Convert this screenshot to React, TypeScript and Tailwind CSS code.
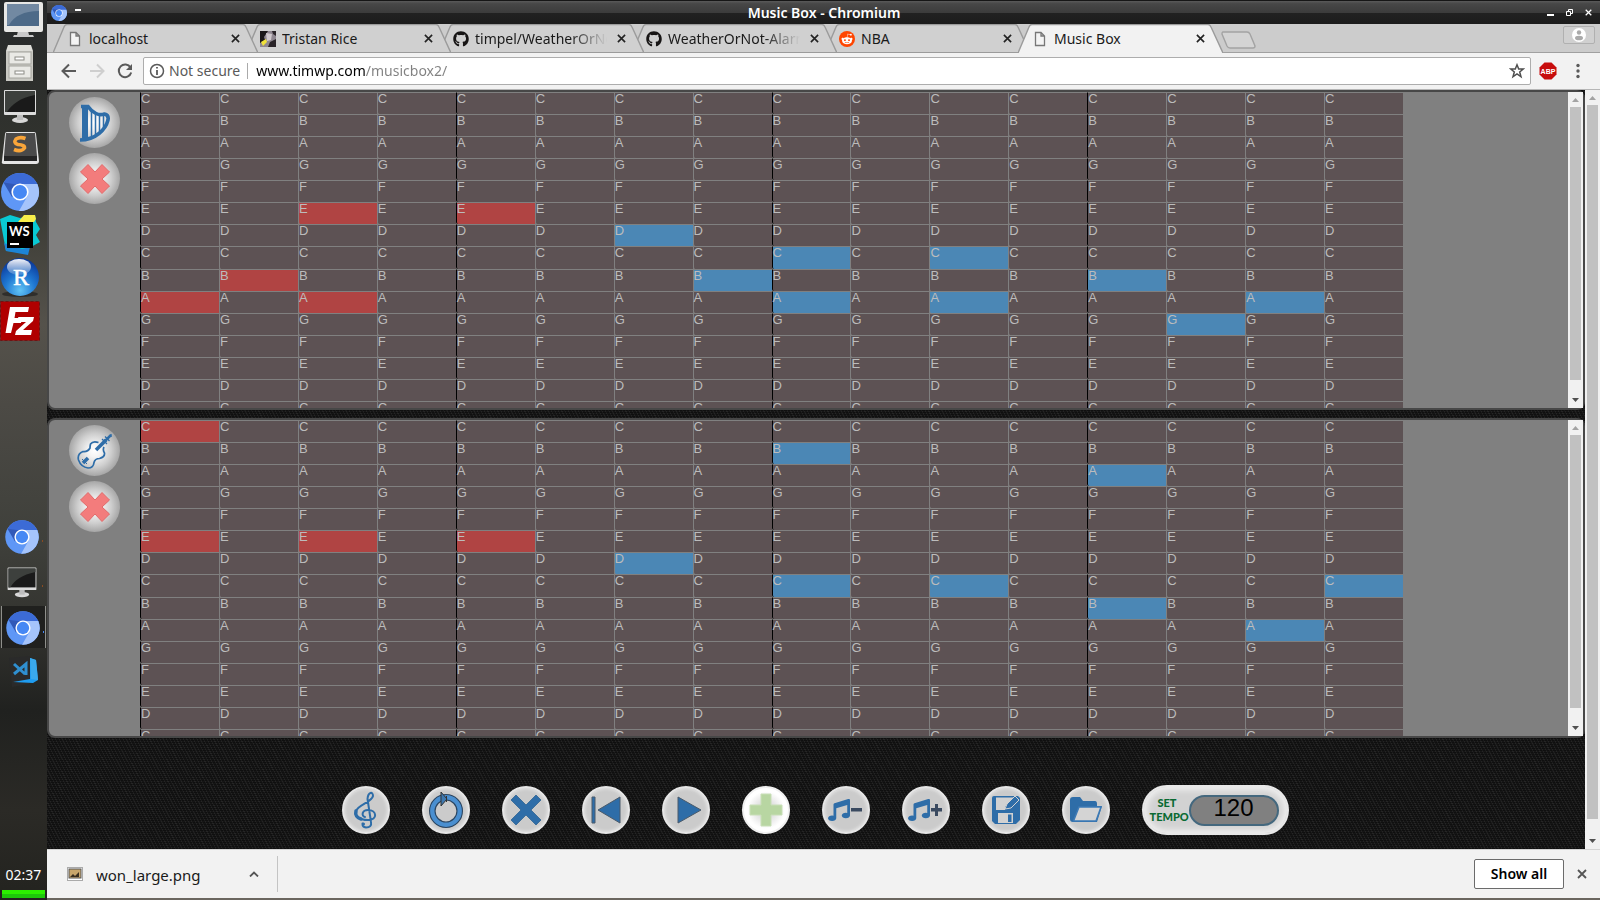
import type { ReactNode } from "react";
import { FaGithub, FaRedditAlien, FaMusic } from "react-icons/fa";

const NOTES = ["C", "B", "A", "G", "F", "E", "D", "C", "B", "A", "G", "F", "E", "D", "C"];
const COLUMNS = Array.from({ length: 16 }, (_, i) => i);

type Marks = Record<string, "red" | "blue">;

const HARP: Marks = {
  "5-2": "red", "5-4": "red", "8-1": "red", "9-0": "red", "9-2": "red",
  "6-6": "blue", "7-8": "blue", "7-10": "blue", "8-7": "blue", "8-12": "blue",
  "9-8": "blue", "9-10": "blue", "9-14": "blue", "10-13": "blue",
};

const VIOLIN: Marks = {
  "0-0": "red", "5-0": "red", "5-2": "red", "5-4": "red",
  "1-8": "blue", "2-12": "blue", "6-6": "blue", "7-8": "blue", "7-10": "blue",
  "7-15": "blue", "8-12": "blue", "9-14": "blue",
};

/* ---------- desktop launcher ---------- */

function Chromium() {
  return (
    <g>
      <circle r="19" fill="#5f97f6" />
      <path d="M0 0L-16.5-9.5A19 19 0 0 1 16.5-9.5L18-7H0Z" fill="#3c6bd6" />
      <path d="M-16.5-9.5L-8 5L0-7Z" fill="#3159b8" />
      <path d="M0-8H17.3A19 19 0 0 1-1 19L8 3Z" fill="#a5c4fb" />
      <circle r="8.6" fill="#fff" />
      <circle r="7" fill="#4688f4" />
    </g>
  );
}

function DarkMonitor() {
  return (
    <g>
      <ellipse cx="0" cy="14" rx="8" ry="3" fill="#d8d8d8" />
      <rect x="-3" y="8" width="6" height="6" fill="#bdbdbd" />
      <rect x="-16" y="-16" width="32" height="25" rx="1" fill="#dcdcdc" />
      <rect x="-15" y="-15" width="30" height="21" fill="#1a1a1a" />
      <path d="M-15-15H15V-11C0-8-8-2-13 6H-15Z" fill="#3d403d" />
    </g>
  );
}

function Launcher({ name, box, tall, children }: { name: string; box: string; tall?: boolean; children: ReactNode }) {
  return (
    <button aria-label={name} className="block shrink-0">
      <svg viewBox={box} className={tall ? "block h-[45px] w-[47px]" : "block h-[43px] w-[47px]"}>
        {children}
      </svg>
    </button>
  );
}

function Sidebar() {
  return (
    <nav
      aria-label="Launcher"
      className="flex w-[47px] shrink-0 flex-col bg-linear-[180deg,#26292a_0%,#34352f_20%,#55524b_36%,#4c4a45_45%,#3f403b_60%,#32322e_70%,#20211f_79%,#2b2a26_90%,#23231f_100%]"
    >
      <Launcher name="Files on desktop" box="0 0 47 43">
        <path d="M18 31h10l1 4h4l1 2H13l1-2h3z" fill="#c9c9c9" />
        <rect x="4" y="2" width="39" height="30" rx="2" fill="#e8e8e6" />
        <rect x="7" y="4" width="32" height="22" fill="#4d6a88" />
        <path d="M7 4H39V11C24 11 14 16 9 25H7Z" fill="#7289a2" />
      </Launcher>
      <Launcher name="File cabinet" box="0 43 47 43">
        <path d="M8 45H31L33 51V81H6V51Z" fill="#deded9" />
        <path d="M6 51H33V81H6Z" fill="#c9c9c3" />
        <rect x="9" y="52" width="22" height="12" fill="#e9e9e5" stroke="#a4a49e" />
        <rect x="9" y="66" width="22" height="12" fill="#e9e9e5" stroke="#a4a49e" />
        <rect x="15" y="57" width="9" height="3" fill="#fff" stroke="#8c8c86" />
        <rect x="15" y="71" width="9" height="3" fill="#fff" stroke="#8c8c86" />
      </Launcher>
      <Launcher name="Terminal" box="0 86 47 43">
        <g transform="translate(20 106)"><DarkMonitor /></g>
      </Launcher>
      <Launcher name="Sublime Text" box="0 129 47 43">
        <path d="M5 134Q5 132 7 132H34Q36 132 36 134L39 161Q39 164 36 164H4Q1 164 2 161Z" fill="#e5e5e5" />
        <path d="M6 133H35L37 156H4Z" fill="#4a4a4a" />
        <path d="M4 156H37V161H4Z" fill="#262626" />
        <path d="M25.500 138.500Q20 136.500 16 139Q13 143 18 144.500Q25 145 24.500 148Q21 152.500 14 149.500" fill="none" stroke="#f9a53a" strokeWidth="3.600" />
      </Launcher>
      <Launcher name="Chromium" box="0 172 47 43">
        <g transform="translate(20 192)"><Chromium /></g>
      </Launcher>
      <Launcher name="WebStorm" box="0 215 47 43">
        <path d="M0 219L10 215L20 218L35 215L36 222L40 229L36 235L40 242L22 252L6 251Z" fill="#09c9d4" />
        <path d="M4 243L22 249L30 247L28 255L6 251Z" fill="#1d84d6" />
        <path d="M24 215H35L36 219L34 222H18Z" fill="#f8ee4a" />
        <rect x="7" y="222" width="26" height="26" fill="#000" />
        <text x="9" y="236" fontSize="13" fontWeight="700" fill="#fff" fontFamily="Lato, sans-serif">WS</text>
        <rect x="10" y="243" width="9" height="2" fill="#fff" />
      </Launcher>
      <Launcher name="RStudio" box="0 258 47 43">
        <defs>
          <radialGradient id="rball" cx="0.500" cy="0.850" r="0.800">
            <stop offset="0" stopColor="#62c4f5" />
            <stop offset="0.500" stopColor="#1f78d2" />
            <stop offset="1" stopColor="#0b3a9c" />
          </radialGradient>
          <linearGradient id="rshine" x1="0" y1="0" x2="0" y2="1">
            <stop offset="0" stopColor="#fff" stopOpacity="0.950" />
            <stop offset="1" stopColor="#fff" stopOpacity="0.150" />
          </linearGradient>
        </defs>
        <ellipse cx="20" cy="294" rx="18" ry="3" fill="#2f2e2b" />
        <circle cx="20" cy="277" r="19" fill="url(#rball)" />
        <ellipse cx="19" cy="267" rx="12" ry="8" fill="url(#rshine)" />
        <text x="13" y="285" fontSize="24" fill="#fff" stroke="#fff" strokeWidth="0.500" fontFamily="Liberation Serif, serif">R</text>
      </Launcher>
      <Launcher name="FileZilla" box="0 301 47 43">
        <rect x="0.500" y="301.500" width="39" height="39" fill="#b00000" stroke="#6e1414" strokeDasharray="3 2" />
        <path d="M10 307H29L28 312H15.500L14.500 318H22L21 323H13.500L11 333H5.500Z" fill="#fff" />
        <path d="M18 317H34L33 321L23 330H32L31 335H15L16 331L26 322H20Z" fill="#fff" />
      </Launcher>

      <div className="mt-[171px] flex flex-col">
        <Launcher name="Chromium window" box="0 515 47 45" tall>
          <g transform="translate(22 537) scale(0.880)"><Chromium /></g>
          <rect x="42" y="540" width="1" height="2" fill="#8a4a20" />
        </Launcher>
        <Launcher name="Terminal window" box="0 560 47 45" tall>
          <g transform="translate(22 582) scale(0.900)"><DarkMonitor /></g>
          <rect x="42" y="585" width="1" height="2" fill="#8a4a20" />
        </Launcher>
        <Launcher name="Music Box window" box="0 605 47 45" tall>
          <rect x="1" y="606" width="45" height="42" fill="#20201e" />
          <rect x="1" y="606" width="1" height="42" fill="#8f8f8b" />
          <rect x="45" y="606" width="1" height="42" fill="#8f8f8b" />
          <g transform="translate(23 628) scale(0.880)"><Chromium /></g>
          <rect x="43" y="631" width="1" height="2" fill="#4688f4" />
        </Launcher>
        <Launcher name="Visual Studio Code" box="0 650 47 45" tall>
          <path d="M9 658L30 656L29 684L12 687Z" fill="#2a2a2a" />
          <path d="M30 658L36 660L38 680L33 683L13 682L30 679Z" fill="#1f9cf0" />
          <path d="M30 658L36 660L38 680L31 679Z" fill="#3aa9ec" />
          <path d="M14 664L25 674M14 674L26 664V675" fill="none" stroke="#2f8fd0" strokeWidth="3" />
        </Launcher>
      </div>

      <div className="mt-auto pb-0.5">
        <p className="text-center font-['Noto_Sans',sans-serif] text-sm leading-[30px] text-white">02:37</p>
        <div className="mx-0.5 h-1 bg-[#2cf000]" />
        <div className="mx-0.5 h-1 bg-[#1ec80a]" />
      </div>
    </nav>
  );
}

/* ---------- browser chrome ---------- */

function Cross({ className }: { className: string }) {
  return (
    <svg viewBox="0 0 10 10" className={className} fill="none" stroke="currentColor" strokeWidth="1.800">
      <path d="M1 1L9 9M9 1L1 9" />
    </svg>
  );
}

function TitleBar() {
  return (
    <header className="flex h-6 shrink-0 items-center border-t border-[#161616] bg-linear-[180deg,#5a5a5a_0%,#474747_12%,#3c3c3c_50%,#212121_51%,#1c1c1c_100%] px-1 text-white">
      <svg viewBox="-19 -19 38 38" className="size-4"><Chromium /></svg>
      <span className="mt-2 ml-2 h-0.5 w-1.5 self-start bg-white" />
      <h1 className="flex-1 pl-5 text-center text-sm font-semibold">Music Box - Chromium</h1>
      <div className="flex items-center gap-3 pr-1">
        <button aria-label="Minimize" className="flex size-[7px] items-end"><span className="h-0.5 w-full bg-white" /></button>
        <button aria-label="Restore">
          <svg viewBox="0 0 7 7" className="size-[7px]" fill="none" stroke="#fff"><path d="M2.500 2V.5H6.500V4.500H5M.5 2.500H4.500V6.500H.5Z" /></svg>
        </button>
        <button aria-label="Close window"><Cross className="size-[7px]" /></button>
      </div>
    </header>
  );
}

function PageIcon() {
  return (
    <svg viewBox="0 0 16 16" className="size-4 shrink-0" fill="#f4f4f4" stroke="#777" strokeWidth="1.300">
      <path d="M3.500 1.500H9L12.500 5V14.500H3.500ZM9 1.500V5H12.500" />
    </svg>
  );
}

function Tab({ title, icon, active, order }: { title: string; icon: ReactNode; active?: boolean; order: string }) {
  const faded = title.length > 15;
  return (
    <div role="tab" aria-selected={!!active} className={`relative -mr-3 flex h-[29px] w-[205px] shrink-0 items-center pl-3.5 ${order}`}>
      <svg viewBox="0 0 205 29" className="absolute inset-0 h-full w-full" fill={active ? "#f2f2f2" : "#d0d0d0"} stroke="#9b9b9b">
        <path d="M0 29L11 3Q12 .5 14 .5H190Q192 .5 193 3L205 29" strokeWidth="1.400" />
        {!active && <path d="M0 28.500H205" />}
      </svg>
      <span className="relative flex w-4 shrink-0">{icon}</span>
      <span
        className={`relative ml-1.5 w-[134px] overflow-hidden text-sm whitespace-nowrap text-[#1a1a1a] ${faded ? "mask-[linear-gradient(90deg,#000_96px,transparent_132px)]" : ""}`}
      >
        {title}
      </span>
      <button aria-label={`Close ${title}`} className="relative ml-2 shrink-0 text-[#222]"><Cross className="size-[9px]" /></button>
    </div>
  );
}

function TabStrip() {
  return (
    <div role="tablist" className="relative z-0 flex h-[29px] shrink-0 border-b border-[#a0a0a0] bg-[#cccccc] pl-1.5">
      <Tab title="localhost" icon={<PageIcon />} order="z-[5]" />
      <Tab
        title="Tristan Rice"
        order="z-[4]"
        icon={
          <svg viewBox="0 0 16 16" className="size-4">
            <rect width="16" height="16" fill="#8f8790" />
            <path d="M0 0H8L4 6L5 9L0 12Z" fill="#1a1718" />
            <path d="M12 0H16V5L13 3ZM10 11L16 8V16H8Z" fill="#2a2428" />
            <path d="M6 2L12 3L11 9L7 10Z" fill="#cfc8cc" />
            <path d="M1 11L6 8L7 11L3 15Z" fill="#f0e23a" />
          </svg>
        }
      />
      <Tab title="timpel/WeatherOrNot" icon={<FaGithub className="size-4 text-[#171515]" />} order="z-[3]" />
      <Tab title="WeatherOrNot-Alarm" icon={<FaGithub className="size-4 text-[#171515]" />} order="z-[2]" />
      <Tab
        title="NBA"
        order="z-[1]"
        icon={<span className="flex size-4 items-center justify-center rounded-full bg-[#ff4500] text-white"><FaRedditAlien className="size-3" /></span>}
      />
      <Tab title="Music Box" icon={<PageIcon />} active order="z-[6]" />
      <button aria-label="New tab" className="mt-[7px] ml-2.5 h-[18px] w-9">
        <svg viewBox="0 0 36 18" className="block h-[18px] w-9" fill="#d4d4d4" stroke="#a3a3a3" strokeWidth="1.400">
          <path d="M2 1H26Q28 1 29 3L34 15Q34 17 32 17H9Q7 17 6 15L1 3Q1 1 2 1Z" />
        </svg>
      </button>
      <button aria-label="Profile" className="mt-0.5 mr-[5px] ml-auto flex h-[18px] w-8 items-center justify-center rounded-xs border border-[#b0b0b0] bg-[#d0d0d0]">
        <svg viewBox="0 0 14 14" className="size-3.5"><circle cx="7" cy="7" r="7" fill="#fff" /><circle cx="7" cy="4.500" r="2.200" fill="#aaa" /><ellipse cx="7" cy="10" rx="4" ry="2.300" fill="#aaa" /></svg>
      </button>
    </div>
  );
}

function AddressBar() {
  return (
    <div className="flex h-[37px] shrink-0 items-center border-b border-[#b6b6b6] bg-[#f2f2f2] pr-[15px] pl-3.5">
      <button aria-label="Back" className="mr-3 text-[#5a5a5a]">
        <svg viewBox="0 0 16 16" className="size-4" fill="none" stroke="currentColor" strokeWidth="2"><path d="M15 8H2M8 1.500L1.500 8L8 14.500" /></svg>
      </button>
      <button aria-label="Forward" className="mr-3 text-[#cfcfcf]">
        <svg viewBox="0 0 16 16" className="size-4" fill="none" stroke="currentColor" strokeWidth="2"><path d="M1 8H14M8 1.500L14.500 8L8 14.500" /></svg>
      </button>
      <button aria-label="Reload" className="mr-2.5 text-[#5a5a5a]">
        <svg viewBox="0 0 16 16" className="size-4" fill="none" stroke="currentColor" strokeWidth="2"><path d="M13.500 4.500A6.300 6.300 0 1 0 14.200 9.500" /><path d="M15 1V7H9Z" fill="currentColor" stroke="none" /></svg>
      </button>
      <div className="flex h-7 flex-1 items-center rounded-xs border border-[#adadad] bg-white px-[5px]">
        <svg viewBox="0 0 16 16" className="size-4" fill="none" stroke="#5a5a5a" strokeWidth="1.500"><circle cx="8" cy="8" r="6.500" /><path d="M8 7V12M8 4V5.600" strokeWidth="1.800" /></svg>
        <span className="ml-1 text-sm text-[#5a5a5a]">Not secure</span>
        <span className="ml-[7px] h-4 w-px bg-[#aaa]" />
        <input
          aria-label="Address"
          defaultValue="www.timwp.com/musicbox2/"
          className="ml-2 min-w-0 flex-1 bg-[linear-gradient(90deg,#000_109px,#808080_109px)] bg-clip-text text-sm text-transparent outline-none"
        />
        <button aria-label="Bookmark">
          <svg viewBox="0 0 16 16" className="size-4" fill="none" stroke="#4f4f4f" strokeWidth="1.500"><path d="M8 1.800L9.700 6H14.300L10.700 9L12 13.800L8 11L4 13.800L5.300 9L1.700 6H6.300Z" /></svg>
        </button>
      </div>
      <button aria-label="AdBlock Plus" className="ml-2">
        <svg viewBox="0 0 18 18" className="size-[18px]"><path d="M5.500 .5H12.500L17.500 5.500V12.500L12.500 17.500H5.500L.5 12.500V5.500Z" fill="#c70d0d" /><text x="9" y="12" textAnchor="middle" fontSize="7" fontWeight="700" fill="#fff" fontFamily="Liberation Sans, sans-serif">ABP</text></svg>
      </button>
      <button aria-label="Menu" className="ml-3.5">
        <svg viewBox="0 0 14 16" className="h-4 w-3.5" fill="#5a5a5a"><circle cx="7" cy="2.500" r="1.700" /><circle cx="7" cy="8" r="1.700" /><circle cx="7" cy="13.500" r="1.700" /></svg>
      </button>
    </div>
  );
}

/* ---------- music box page ---------- */

function ScrollBar({ thumb }: { thumb: string }) {
  return (
    <div aria-hidden="true" className="flex w-[15px] shrink-0 flex-col bg-[#f1f1f1]">
      <svg viewBox="0 0 15 15" className="size-[15px]"><path d="M4 10L7.500 6L11 10Z" fill="#a3a3a3" /></svg>
      <div className={`mx-0.5 bg-[#c1c1c1] ${thumb}`} />
      <svg viewBox="0 0 15 15" className="mt-auto size-[15px]"><path d="M4 5L7.500 9L11 5Z" fill="#505050" /></svg>
    </div>
  );
}

function KnobButton({ label, children }: { label: string; children: ReactNode }) {
  return (
    <button
      aria-label={label}
      className="flex size-[51px] items-center justify-center rounded-full bg-[radial-gradient(circle_closest-side,#ffffff_0%,#f4f4f4_25%,#cfcfcf_65%,#a6a6a6_100%)]"
    >
      {children}
    </button>
  );
}

function Track({ name, icon, marks }: { name: string; icon: ReactNode; marks: Marks }) {
  return (
    <section aria-label={name} className="flex h-80 rounded-lg border-2 border-[#474747] bg-[#808080]">
      <div className="flex w-[91px] shrink-0 flex-col items-center gap-[5px] pt-[5px]">
        <KnobButton label={`${name} instrument`}>{icon}</KnobButton>
        <KnobButton label={`Remove ${name}`}>
          <svg viewBox="0 0 30 30" className="size-[30px]"><path d="M8 .5L15 8L22 .5L29.500 8L22 15L29.500 22L22 29.500L15 22L8 29.500L.5 22L8 15L.5 8Z" fill="#f37c7c" stroke="#e06a6a" /></svg>
        </KnobButton>
      </div>
      <div className="min-w-0 flex-1 overflow-hidden">
        <div className="grid h-[331px] w-[1263px] grid-cols-16 grid-rows-[repeat(15,minmax(0,1fr))]">
          {NOTES.map((note, row) =>
            COLUMNS.map((col) => {
              const mark = marks[`${row}-${col}`];
              const fill = mark === "red" ? "bg-[#b04443]" : mark === "blue" ? "bg-[#4b87b5]" : "bg-[#5d5254]";
              const beat = col % 4 === 0 ? "border-l-black" : "border-l-[#808080]";
              return (
                <button
                  key={`${row}-${col}`}
                  aria-pressed={!!mark}
                  className={`flex items-start rounded-bl-[2px] border-t border-l border-t-[#808080] text-left font-['Liberation_Sans',sans-serif] text-[13px] leading-3 text-[#bcbcbc] ${beat} ${fill}`}
                >
                  {note}
                </button>
              );
            }),
          )}
        </div>
      </div>
      <ScrollBar thumb="h-[273px]" />
    </section>
  );
}

function RoundButton({ label, light, children }: { label: string; light?: boolean; children: ReactNode }) {
  return (
    <button
      aria-label={label}
      className={`flex size-12 items-center justify-center rounded-full border-2 text-[#2e6da8] ${light ? "border-[#f0f0f0] bg-radial from-[#c8c8c8] to-white to-60%" : "border-[#e6e6e6] bg-[#cbcbcb] shadow-[inset_0_0_3px_1px_#e4e4e4]"}`}
    >
      {children}
    </button>
  );
}

function Controls() {
  return (
    <div className="flex items-center justify-center gap-8 pr-0.5">
      <RoundButton label="Instrument">
        <svg viewBox="0 0 26 38" className="h-[38px] w-[26px]" fill="none" stroke="currentColor" strokeWidth="2" strokeLinecap="round">
          <path d="M12 26C8 25 9 19 15 19C24 19 25 29 15 29C6 29 1 25 3 20C5 14 19 11 20 5C20 0 15 1 14.500 8L18 31Q19 36.500 13 36.500Q9 36 9.500 32.500" />
          <path d="M3 20C2 24 4 27 8 28" strokeWidth="3.500" />
          <circle cx="10.500" cy="33" r="1.500" fill="currentColor" stroke="none" />
        </svg>
      </RoundButton>
      <RoundButton label="Loop">
        <svg viewBox="0 0 36 38" className="h-[38px] w-9">
          <circle cx="18" cy="20" r="13.700" fill="none" stroke="#2b4560" strokeWidth="6.600" />
          <circle cx="18" cy="20" r="13.700" fill="none" stroke="#4a8fd0" strokeWidth="4.400" />
          <path d="M13 1L19 8L13 15Z" fill="#3d78b0" stroke="#333" />
          <path d="M18.500 5V11" stroke="#333" />
        </svg>
      </RoundButton>
      <RoundButton label="Clear">
        <svg viewBox="0 0 32 32" className="size-8"><path d="M6 1L16 11L26 1L31 6L21 16L31 26L26 31L16 21L6 31L1 26L11 16L1 6Z" fill="#2e6da8" stroke="#3f6f9a" /></svg>
      </RoundButton>
      <RoundButton label="Rewind">
        <svg viewBox="0 0 32 32" className="size-8" fill="#2e6da8" stroke="#4a5a6a"><path d="M2 3H5V29H2ZM30 3V29L8 16Z" /></svg>
      </RoundButton>
      <RoundButton label="Play">
        <svg viewBox="0 0 32 32" className="size-8" fill="#2e6da8" stroke="#4a5a6a"><path d="M8 3V29L31 16Z" /></svg>
      </RoundButton>
      <RoundButton label="Add track" light>
        <svg viewBox="0 0 34 34" className="size-[34px]"><path d="M12 1H22V12H33V22H22V33H12V22H1V12H12Z" fill="#b8d6a2" stroke="#c9dfb8" /></svg>
      </RoundButton>
      <RoundButton label="Fewer measures">
        <FaMusic className="-ml-0.5 size-[22px] shrink-0" />
        <svg viewBox="0 0 12 12" className="size-3 shrink-0"><path d="M1 4H12V7.500H1Z" fill="#3a4a60" /></svg>
      </RoundButton>
      <RoundButton label="More measures">
        <FaMusic className="-ml-0.5 size-[22px] shrink-0" />
        <svg viewBox="0 0 12 12" className="size-3 shrink-0"><path d="M5 0H8V4H12V7.500H8V12H5V7.500H1V4H5Z" fill="#3a4a60" /></svg>
      </RoundButton>
      <RoundButton label="Save">
        <svg viewBox="0 0 30 30" className="size-[30px]">
          <path d="M3 1H27L29 3V25L25 29H4L1 26V3Q1 1 3 1Z" fill="#2e6da8" />
          <path d="M5 2.500H23L14 12V15H5Z" fill="#d2d2d2" />
          <path d="M7 18H22V28H7Z" fill="#d2d2d2" />
          <path d="M17 19.500H20.500V27H17Z" fill="#2e6da8" />
          <path d="M14 14L16 9L24 1L28 5L20 13Z" fill="#2e6da8" stroke="#d2d2d2" />
        </svg>
      </RoundButton>
      <RoundButton label="Open">
        <svg viewBox="0 0 34 28" className="h-7 w-[34px]">
          <path d="M1 4Q1 1 4 1H11L14 5H26Q28 5 28 8V10H33L28 26H4Q1 26 1 23Z" fill="#2e6da8" />
          <path d="M10 11H32L27 25H4.500Z" fill="#d4d4d4" stroke="#3d7ab5" strokeWidth="1.500" />
        </svg>
      </RoundButton>
      <div className="flex h-[50px] w-[147px] items-center gap-1 rounded-full border-2 border-[#e8e8e8] bg-[#d2d2d2] pl-1.5 shadow-[inset_0_0_6px_3px_#f0f0f0]">
        <label htmlFor="tempo" className="w-[35px] text-center font-[Lato,sans-serif] text-[11px] leading-[14px] font-black text-[#0a6a32]">
          SET TEMPO
        </label>
        <input
          id="tempo"
          defaultValue="120"
          className="h-[31px] w-[90px] rounded-full border-2 border-[#44687e] bg-[#808080] pb-1 text-center font-['Liberation_Sans',sans-serif] text-2xl leading-6 text-black outline-none"
        />
      </div>
    </div>
  );
}

const harp = (
  <svg viewBox="0 0 32 38" className="h-[38px] w-8" fill="none" stroke="#2e6da8">
    <path d="M3 1H9V34H3Z" fill="#2e6da8" stroke="none" />
    <path d="M2 2.500H9Q12 7 17 9.500Q21 11.500 25.500 10Q30 11 29 16Q27 24 20 29.500Q12 36 1 36" strokeWidth="3.600" />
    <path d="M12.500 8V32M16.500 10V30M20.500 11V27M24.500 11V23" strokeWidth="1.500" />
  </svg>
);

const violin = (
  <svg viewBox="0 0 36 36" className="size-9" fill="none" stroke="#2e6da8" strokeWidth="1.700">
    <path d="M21.500 9.500Q16 7.500 13.500 11Q13 13 13 15Q11 19 6 18.500Q0 21 1.500 27Q4 34 11 35Q16.500 35 17 29.500Q18 25.500 22.500 25.500Q28 24 27.500 20Q25.500 17 27 14" />
    <path d="M19 17L29 7" strokeWidth="3.500" />
    <path d="M28 8L34 2" strokeWidth="2.500" />
    <path d="M25 6L30 11M28 3.500L32.500 8M34 1V4" strokeWidth="1.300" />
    <path d="M6 30L11 25" strokeWidth="3.500" />
    <path d="M5 26L10 31" strokeWidth="1" />
  </svg>
);

function DownloadBar() {
  return (
    <footer className="flex h-[49px] shrink-0 items-center border-t border-[#d4d4d4] bg-[#f2f2f2] pl-5">
      <svg viewBox="0 0 16 14" className="h-3.5 w-4"><rect x=".5" y=".5" width="15" height="13" fill="#fff" stroke="#aaa" /><rect x="2" y="2" width="12" height="9" fill="#c9a66b" stroke="#555" /><path d="M3 10L6 7L8 9L12 5V10Z" fill="#3a2f20" /></svg>
      <a href="#download" className="ml-[13px] w-[153px] pt-0.5 text-[15px] text-[#1a1a1a]">won_large.png</a>
      <button aria-label="Download options">
        <svg viewBox="0 0 10 6" className="h-1.5 w-2.5" fill="none" stroke="#555" strokeWidth="1.800"><path d="M1 5.500L5 1.500L9 5.500" /></svg>
      </button>
      <span className="ml-[18px] h-9 w-px bg-[#c4c4c4]" />
      <button className="ml-auto h-[30px] w-[90px] rounded-xs border border-[#6b6b6b] bg-white text-sm font-semibold text-black">Show all</button>
      <button aria-label="Close downloads" className="mx-[13px] text-[#555]"><Cross className="size-2.5" /></button>
    </footer>
  );
}

export default function App() {
  return (
    <div className="flex h-screen w-full overflow-hidden font-['Noto_Sans',sans-serif]">
      <Sidebar />
      <div className="flex min-w-0 flex-1 flex-col bg-[#6b665f] pb-0.5">
        <TitleBar />
        <TabStrip />
        <AddressBar />
        <div className="flex min-h-0 flex-1">
          <main className="flex min-w-0 flex-1 flex-col gap-2 overflow-hidden bg-[#161616] bg-[repeating-linear-gradient(0deg,#00000050_0px,#00000050_1px,transparent_1px,transparent_2px),repeating-linear-gradient(63deg,#ffffff10_0px,#ffffff10_1px,transparent_1px,transparent_3px)]">
            <Track name="Harp" icon={harp} marks={HARP} />
            <Track name="Violin" icon={violin} marks={VIOLIN} />
            <div className="pt-[39px]">
              <Controls />
            </div>
          </main>
          <ScrollBar thumb="flex-1 mb-[15px]" />
        </div>
        <DownloadBar />
      </div>
    </div>
  );
}
